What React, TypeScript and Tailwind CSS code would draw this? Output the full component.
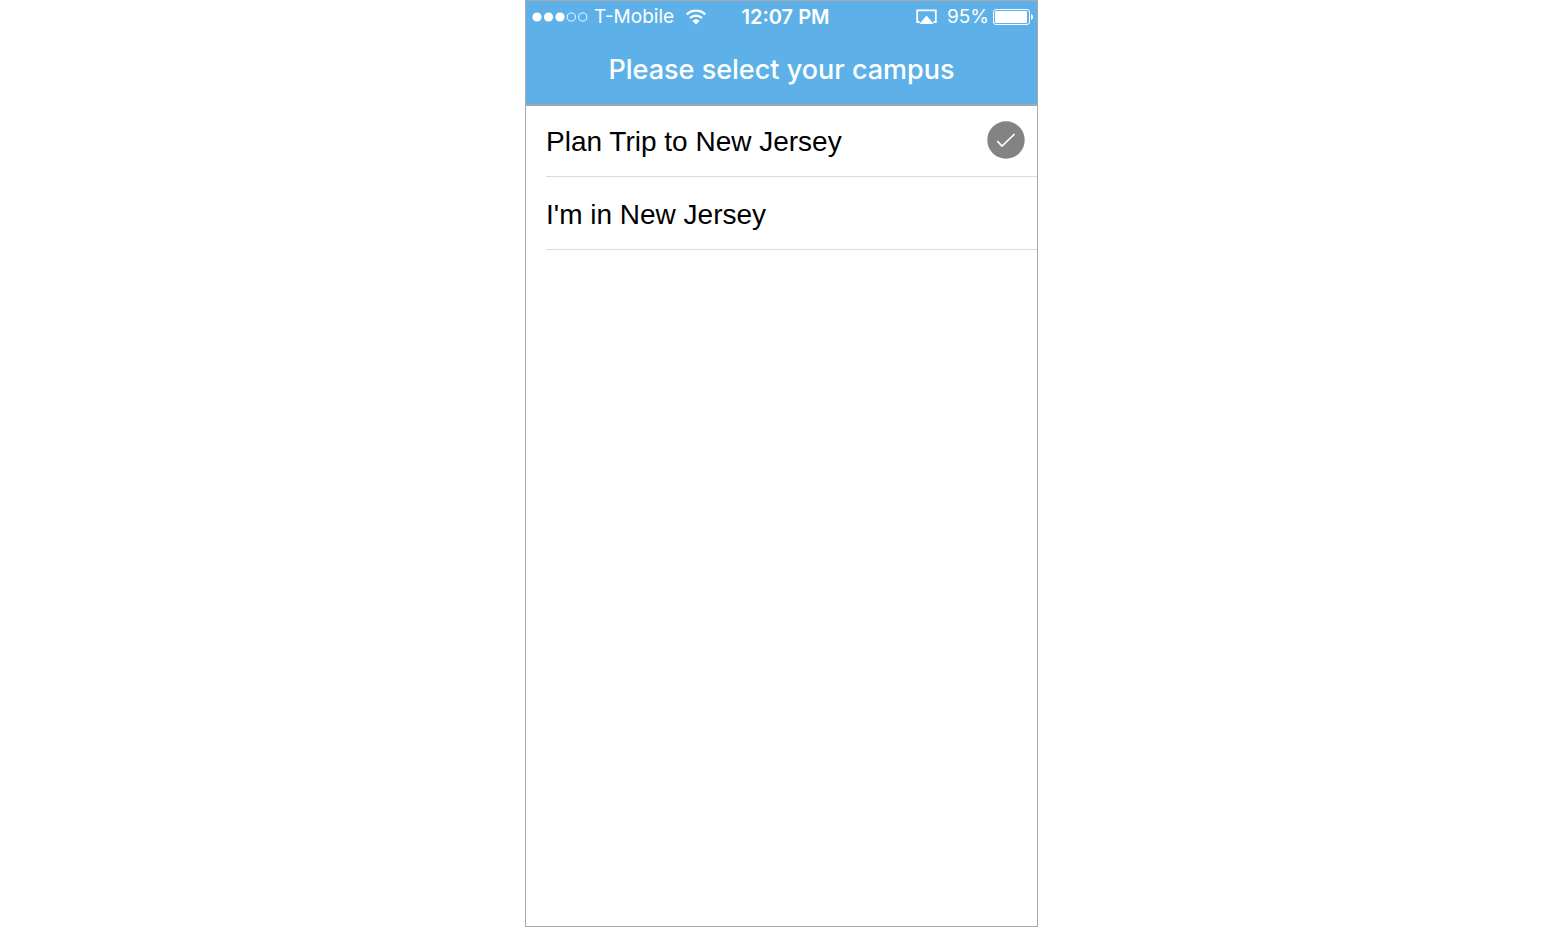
import React, { useState } from "react";

const campuses = [
    { id: "plan-trip", label: "Plan Trip to New Jersey" },
    { id: "local", label: "I'm in New Jersey" },
];

function SignalDots() {
    return (
        <svg width="56" height="10" viewBox="0 0 56 10" fill="white" aria-hidden="true">
            <circle cx="5" cy="5" r="4.6" />
            <circle cx="16.5" cy="5" r="4.6" />
            <circle cx="28" cy="5" r="4.6" />
            <circle cx="39.3" cy="5" r="4.1" fill="none" stroke="white" strokeWidth="0.9" />
            <circle cx="50.7" cy="5" r="4.1" fill="none" stroke="white" strokeWidth="0.9" />
        </svg>
    );
}

function WifiIcon() {
    return (
        <svg width="20" height="16" viewBox="0 0 20 16" fill="none" stroke="white" strokeWidth="2.3" aria-hidden="true">
            <path d="M0.8 5.4C6 0.3 14 0.3 19.2 5.4" />
            <path d="M4 9C7.4 5.7 12.6 5.7 16 9" />
            <path d="M6.4 11.8C8.6 9.8 11.4 9.8 13.6 11.8L10 15.4Z" fill="white" stroke="none" />
        </svg>
    );
}

function AirplayIcon() {
    return (
        <svg width="21" height="16" viewBox="0 0 21 16" aria-hidden="true">
            <path d="M3.6 13H1.2V1.4H19.8V13H17.4" fill="none" stroke="white" strokeWidth="1.8" />
            <path d="M10.5 6.4L17.6 15H3.4Z" fill="white" />
        </svg>
    );
}

function BatteryIcon() {
    return (
        <svg width="40" height="16" viewBox="0 0 40 16" aria-hidden="true">
            <rect x="0.5" y="0.5" width="36" height="15" rx="2.5" fill="none" stroke="white" />
            <rect x="2" y="2" width="32" height="12" rx="1" fill="white" />
            <path d="M38 5C40.8 6 40.8 10 38 11Z" fill="white" />
        </svg>
    );
}

function CheckBadge() {
    return (
        <svg width="38" height="38" viewBox="0 0 38 38" fill="none" aria-hidden="true">
            <circle cx="19" cy="19" r="18.7" fill="#838383" />
            <path d="M10.3 20.2L15 25L27.6 13" stroke="white" strokeWidth="1.7" />
        </svg>
    );
}

export default function App() {
    const [selected, setSelected] = useState("plan-trip");

    return (
        <div className="min-h-screen bg-white flex justify-center pl-[7px] font-['Inter',sans-serif]">
            <div className="w-full max-w-[513px] border border-[#a9a9a9] flex flex-col">
                {/* Header */}
                <header className="relative bg-[#5db1e8] text-white shadow-[0_2px_0_#a2a9ae]">
                    <div className="grid grid-cols-[1fr_auto_1fr] items-center h-8 pl-1.5 pr-1 text-[19px] leading-8">
                        <div className="flex items-center">
                            <SignalDots />
                            <span className="ml-1.5 mr-3">T-Mobile</span>
                            <WifiIcon />
                        </div>
                        <time className="pl-1.5 text-[20px] font-semibold">12:07 PM</time>
                        <div className="flex items-center justify-end">
                            <AirplayIcon />
                            <span className="ml-2.5 mr-1">95%</span>
                            <BatteryIcon />
                        </div>
                    </div>
                    <h1 className="h-[71px] pt-4 text-center text-[27px] leading-[42px] font-medium">
                        Please select your campus
                    </h1>
                </header>

                {/* Campus list */}
                <ul className="pl-5 font-['Liberation_Sans',sans-serif]">
                    {campuses.map((campus) => (
                        <li key={campus.id} className="border-b border-[#dcdcdc]">
                            <button
                                type="button"
                                aria-pressed={selected === campus.id}
                                onClick={() => setSelected(campus.id)}
                                className="w-full h-[72px] pr-3 flex items-center justify-between text-left text-[28px] text-black"
                            >
                                <span className="pt-1">{campus.label}</span>
                                {selected === campus.id && <CheckBadge />}
                            </button>
                        </li>
                    ))}
                </ul>
            </div>
        </div>
    );
}
